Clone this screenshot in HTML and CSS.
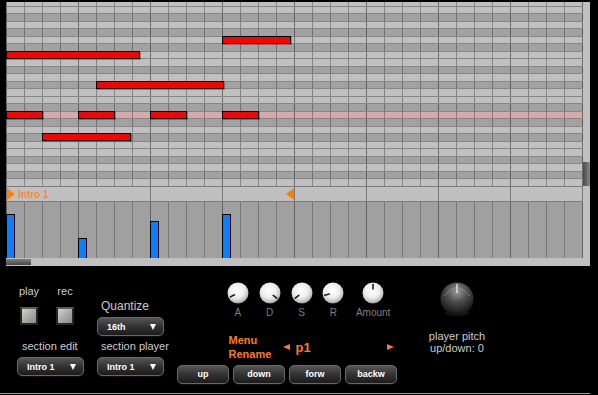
FILE: index.html
```html
<!DOCTYPE html>
<html>

<head>
    <title>Sequencer</title>
    <link rel="stylesheet" href="styles.css">
</head>

<body>
    <div class="editor">
        <div class="track">
            <div class="roll">
                <div class="keys">
                    <div class="key top"></div>
                    <div class="key"></div>
                    <div class="key dark"></div>
                    <div class="key"></div>
                    <div class="key dark"></div>
                    <div class="key"></div>
                    <div class="key dark"></div>
                    <div class="key"></div>
                    <div class="key"></div>
                    <div class="key dark"></div>
                    <div class="key"></div>
                    <div class="key dark"></div>
                    <div class="key"></div>
                    <div class="key"></div>
                    <div class="key dark"></div>
                    <div class="key hilite"></div>
                    <div class="key dark"></div>
                    <div class="key"></div>
                    <div class="key dark"></div>
                    <div class="key"></div>
                    <div class="key"></div>
                    <div class="key dark"></div>
                    <div class="key"></div>
                    <div class="key dark"></div>
                    <div class="key"></div>
                </div>
                <div class="note" style="left:216px; top:34px; width:69px"></div>
                <div class="note" style="left:0px; top:49px; width:134px"></div>
                <div class="note" style="left:90px; top:79px; width:128px"></div>
                <div class="note" style="left:0px; top:109px; width:37px"></div>
                <div class="note" style="left:72px; top:109px; width:37px"></div>
                <div class="note" style="left:144px; top:109px; width:37px"></div>
                <div class="note" style="left:216px; top:109px; width:37px"></div>
                <div class="note" style="left:36px; top:131px; width:89px"></div>
            </div>
            <div class="sections">
                <div class="section">
                    <span class="mark-start"></span>
                    <span class="section-name">Intro 1</span>
                    <span class="mark-end"></span>
                </div>
            </div>
            <div class="velocity">
                <div class="vel" style="left:0px; height:44px"></div>
                <div class="vel" style="left:72px; height:20px"></div>
                <div class="vel" style="left:144px; height:37px"></div>
                <div class="vel" style="left:216px; height:44px"></div>
            </div>
            <div class="hscroll"><div class="hthumb"></div></div>
        </div>
        <div class="vscroll"><div class="vthumb"></div></div>
    </div>

    <div class="controls">
        <div class="col-left">
            <div class="transport">
                <div class="tport">
                    <span class="label">play</span>
                    <div class="tbtn"></div>
                </div>
                <div class="tport">
                    <span class="label">rec</span>
                    <div class="tbtn"></div>
                </div>
            </div>
            <div class="field-label">section edit</div>
            <div class="select"><span>Intro 1</span><span class="caret"></span></div>
        </div>

        <div class="col-mid">
            <div class="quantize-label">Quantize</div>
            <div class="select"><span>16th</span><span class="caret"></span></div>
            <div class="field-label">section player</div>
            <div class="select"><span>Intro 1</span><span class="caret"></span></div>
        </div>

        <div class="col-synth">
            <div class="knobs">
                <div class="knob-cell">
                    <svg class="knob" width="22" height="22" viewBox="0 0 22 22">
                        <defs>
                            <radialGradient id="knob-face" cx="45%" cy="38%" r="62%">
                                <stop offset="0" stop-color="#ffffff" />
                                <stop offset="0.55" stop-color="#efefef" />
                                <stop offset="0.88" stop-color="#c2c2c2" />
                                <stop offset="1" stop-color="#8e8e8e" />
                            </radialGradient>
                        </defs>
                        <circle cx="11" cy="11" r="10.5" fill="url(#knob-face)" />
                        <line x1="11" y1="2.5" x2="11" y2="7" stroke="#1c1c1c" stroke-width="1.6" stroke-linecap="round" transform="rotate(243 11 11)" />
                    </svg>
                    <span class="knob-name">A</span>
                </div>
                <div class="knob-cell">
                    <svg class="knob" width="22" height="22" viewBox="0 0 22 22">
                        <circle cx="11" cy="11" r="10.5" fill="url(#knob-face)" />
                        <line x1="11" y1="2.5" x2="11" y2="7" stroke="#1c1c1c" stroke-width="1.6" stroke-linecap="round" transform="rotate(127 11 11)" />
                    </svg>
                    <span class="knob-name">D</span>
                </div>
                <div class="knob-cell">
                    <svg class="knob" width="22" height="22" viewBox="0 0 22 22">
                        <circle cx="11" cy="11" r="10.5" fill="url(#knob-face)" />
                        <line x1="11" y1="2.5" x2="11" y2="7" stroke="#1c1c1c" stroke-width="1.6" stroke-linecap="round" transform="rotate(233 11 11)" />
                    </svg>
                    <span class="knob-name">S</span>
                </div>
                <div class="knob-cell">
                    <svg class="knob" width="22" height="22" viewBox="0 0 22 22">
                        <circle cx="11" cy="11" r="10.5" fill="url(#knob-face)" />
                        <line x1="11" y1="2.5" x2="11" y2="7" stroke="#1c1c1c" stroke-width="1.6" stroke-linecap="round" transform="rotate(254 11 11)" />
                    </svg>
                    <span class="knob-name">R</span>
                </div>
                <div class="knob-cell wide">
                    <svg class="knob" width="22" height="22" viewBox="0 0 22 22">
                        <circle cx="11" cy="11" r="10.5" fill="url(#knob-face)" />
                        <line x1="11" y1="2.5" x2="11" y2="7" stroke="#1c1c1c" stroke-width="1.6" stroke-linecap="round" />
                    </svg>
                    <span class="knob-name">Amount</span>
                </div>
            </div>

            <div class="preset">
                <div class="menu-links">
                    <div>Menu</div>
                    <div>Rename</div>
                </div>
                <span class="arrow-left"></span>
                <span class="preset-name">p1</span>
                <span class="arrow-right"></span>
            </div>

            <div class="buttons">
                <div class="btn">up</div>
                <div class="btn">down</div>
                <div class="btn">forw</div>
                <div class="btn">backw</div>
            </div>
        </div>

        <div class="col-pitch">
            <svg class="pitch-knob" width="34" height="36" viewBox="0 0 34 36">
                <defs>
                    <radialGradient id="pitch-ball" cx="50%" cy="28%" r="72%">
                        <stop offset="0" stop-color="#9a9a9a" />
                        <stop offset="0.45" stop-color="#4c4c4c" />
                        <stop offset="1" stop-color="#0e0e0e" />
                    </radialGradient>
                </defs>
                <ellipse cx="17" cy="31" rx="12" ry="3" fill="#151515" />
                <circle cx="17" cy="17" r="16.5" fill="url(#pitch-ball)" />
                <path d="M17 5 Q10 7 4 14 M17 5 Q24 7 30 14" stroke="#aaaaaa" stroke-width="0.8" fill="none" opacity="0.6" />
                <line x1="17" y1="2" x2="17" y2="11" stroke="#e6e6e6" stroke-width="1.4" />
            </svg>
            <div class="pitch-label">player pitch<br>up/down: 0</div>
        </div>
    </div>
</body>

</html>
```

FILE: styles.css
```css
body {
    margin: 0;
    width: 598px;
    height: 395px;
    overflow: hidden;
    background-color: #000;
    font-family: "Liberation Sans", Arial, sans-serif;
    color: #cccccc;
}

/* Piano roll editor */
.editor {
    display: flex;
    width: 584px;
    height: 264px;
    margin: 2px 0 0 6px;
    background-color: #c0c0c0;
}

.track {
    width: 577px;
}

.roll {
    position: relative;
    height: 184px;
    overflow: hidden;
}

.key {
    height: 8px;
    box-sizing: border-box;
    border-top: 1px solid #858585;
    background-color: #c0c0c0;
    background-image:
        repeating-linear-gradient(90deg, rgba(0, 0, 0, 0.18) 0 1px, transparent 1px 72px),
        repeating-linear-gradient(90deg, rgba(0, 0, 0, 0.3) 0 1px, transparent 1px 18px);
}

.key:nth-child(even) {
    height: 7px;
}

.key.top {
    height: 4px;
    border-top: 0;
}

.key.dark {
    background-color: #a2a2a2;
}

.key.hilite {
    background-color: #d7a9a9;
}

.note {
    position: absolute;
    height: 8px;
    box-sizing: border-box;
    border: 1px solid #000;
    background-color: #ff0000;
    box-shadow: 1px 1px 0 rgba(0, 0, 0, 0.3);
}

/* Section strip */
.sections {
    height: 14px;
    border-top: 1px solid #7c7c7c;
    border-bottom: 1px solid #7c7c7c;
    background-color: #c0c0c0;
    background-image: repeating-linear-gradient(90deg, rgba(0, 0, 0, 0.38) 0 1px, transparent 1px 72px);
}

.section {
    display: flex;
    align-items: center;
    width: 287px;
    height: 14px;
    margin-left: 1px;
}

.mark-start {
    border-left: 8px solid #ff8000;
    border-top: 6px solid transparent;
    border-bottom: 6px solid transparent;
}

.mark-end {
    border-right: 8px solid #ff8000;
    border-top: 6px solid transparent;
    border-bottom: 6px solid transparent;
}

.section-name {
    flex: 1;
    padding: 1px 0 0 3px;
    font-size: 10px;
    font-weight: bold;
    line-height: 14px;
    color: #ff8a1c;
}

/* Velocity lane */
.velocity {
    position: relative;
    height: 56px;
    background-color: #a0a0a0;
    background-image:
        repeating-linear-gradient(90deg, rgba(0, 0, 0, 0.18) 0 1px, transparent 1px 72px),
        repeating-linear-gradient(90deg, rgba(0, 0, 0, 0.25) 0 1px, transparent 1px 18px);
}

.vel {
    position: absolute;
    bottom: 0;
    width: 9px;
    box-sizing: border-box;
    border: 1px solid #000;
    border-bottom: 0;
    background-color: #0a80ff;
}

/* Scrollbars */
.hscroll {
    height: 8px;
    box-sizing: border-box;
    padding-top: 1px;
}

.hthumb {
    width: 25px;
    height: 6px;
    background: linear-gradient(#808080, #454545);
}

.vscroll {
    width: 7px;
}

.vthumb {
    height: 24px;
    margin-top: 160px;
    background: linear-gradient(90deg, #4a4a4a, #868686);
}

/* Bottom control panel */
.controls {
    display: flex;
    width: 590px;
    height: 127px;
    border-bottom: 1px solid #9c9c9c;
}

.col-left {
    width: 67px;
    margin-left: 17px;
    padding-top: 19px;
}

.transport {
    display: flex;
    gap: 12px;
}

.tport {
    display: flex;
    flex-direction: column;
    align-items: center;
    width: 24px;
}

.label {
    font-size: 11px;
    line-height: 12px;
}

.tbtn {
    width: 18px;
    height: 18px;
    margin-top: 10px;
    box-sizing: border-box;
    border: 2px solid #262626;
    border-top-color: #5c5c5c;
    background: linear-gradient(135deg, #d2d2ca, #a4a49c 60%, #8c8c84);
}

.field-label {
    margin-top: 4px;
    margin-bottom: 5px;
    padding-left: 4px;
    font-size: 11px;
    line-height: 12px;
    white-space: nowrap;
}

.col-left .field-label {
    margin-top: 15px;
    padding-left: 5px;
}

.quantize-label {
    margin-bottom: 4px;
    padding-left: 4px;
    font-size: 12px;
    line-height: 14px;
}

.col-mid {
    width: 67px;
    margin-left: 13px;
    padding-top: 33px;
}

.select {
    display: flex;
    align-items: center;
    height: 19px;
    box-sizing: border-box;
    padding: 0 7px 0 9px;
    border: 1px solid #686868;
    border-radius: 5px;
    background: linear-gradient(#565656, #333333 50%, #1c1c1c);
    box-shadow: 0 1px 1px #111;
    color: #fff;
    font-size: 9px;
    font-weight: bold;
}

.caret {
    margin-left: auto;
    border-top: 6px solid #fff;
    border-left: 3.5px solid transparent;
    border-right: 3.5px solid transparent;
}

.col-synth {
    width: 220px;
    margin-left: 13px;
    padding-top: 16px;
}

.knobs {
    display: flex;
    margin-left: 45px;
}

.knob-cell {
    display: flex;
    flex-direction: column;
    align-items: center;
    width: 32px;
}

.knob-cell.wide {
    width: 48px;
}

.knob {
    display: block;
}

.knob-name {
    margin-top: 3px;
    font-size: 10px;
    line-height: 12px;
    color: #7e7e7e;
}

.preset {
    display: flex;
    align-items: center;
    margin: 14px 3px 0 51.5px;
    color: #ff7a22;
    font-weight: bold;
}

.menu-links {
    width: 54px;
    font-size: 11px;
    line-height: 14px;
}

.arrow-left {
    border-right: 7px solid #ff7a22;
    border-top: 3px solid transparent;
    border-bottom: 3px solid transparent;
}

.arrow-right {
    margin-left: auto;
    border-left: 7px solid #ff7a22;
    border-top: 3px solid transparent;
    border-bottom: 3px solid transparent;
}

.preset-name {
    margin-left: 6px;
    font-size: 13px;
    line-height: 15px;
}

.buttons {
    display: flex;
    gap: 4px;
    margin-top: 4px;
}

.btn {
    width: 52px;
    height: 19px;
    box-sizing: border-box;
    border: 1px solid #686868;
    border-radius: 5px;
    background: linear-gradient(#565656, #333333 50%, #1c1c1c);
    box-shadow: 0 1px 1px #111;
    color: #fff;
    font-size: 9px;
    font-weight: bold;
    line-height: 17px;
    text-align: center;
}

.col-pitch {
    display: flex;
    flex-direction: column;
    align-items: center;
    width: 60px;
    margin-left: 30px;
    padding-top: 16px;
}

.pitch-knob {
    display: block;
}

.pitch-label {
    margin-top: 12px;
    font-size: 11px;
    line-height: 12px;
    text-align: center;
    white-space: nowrap;
}
```
